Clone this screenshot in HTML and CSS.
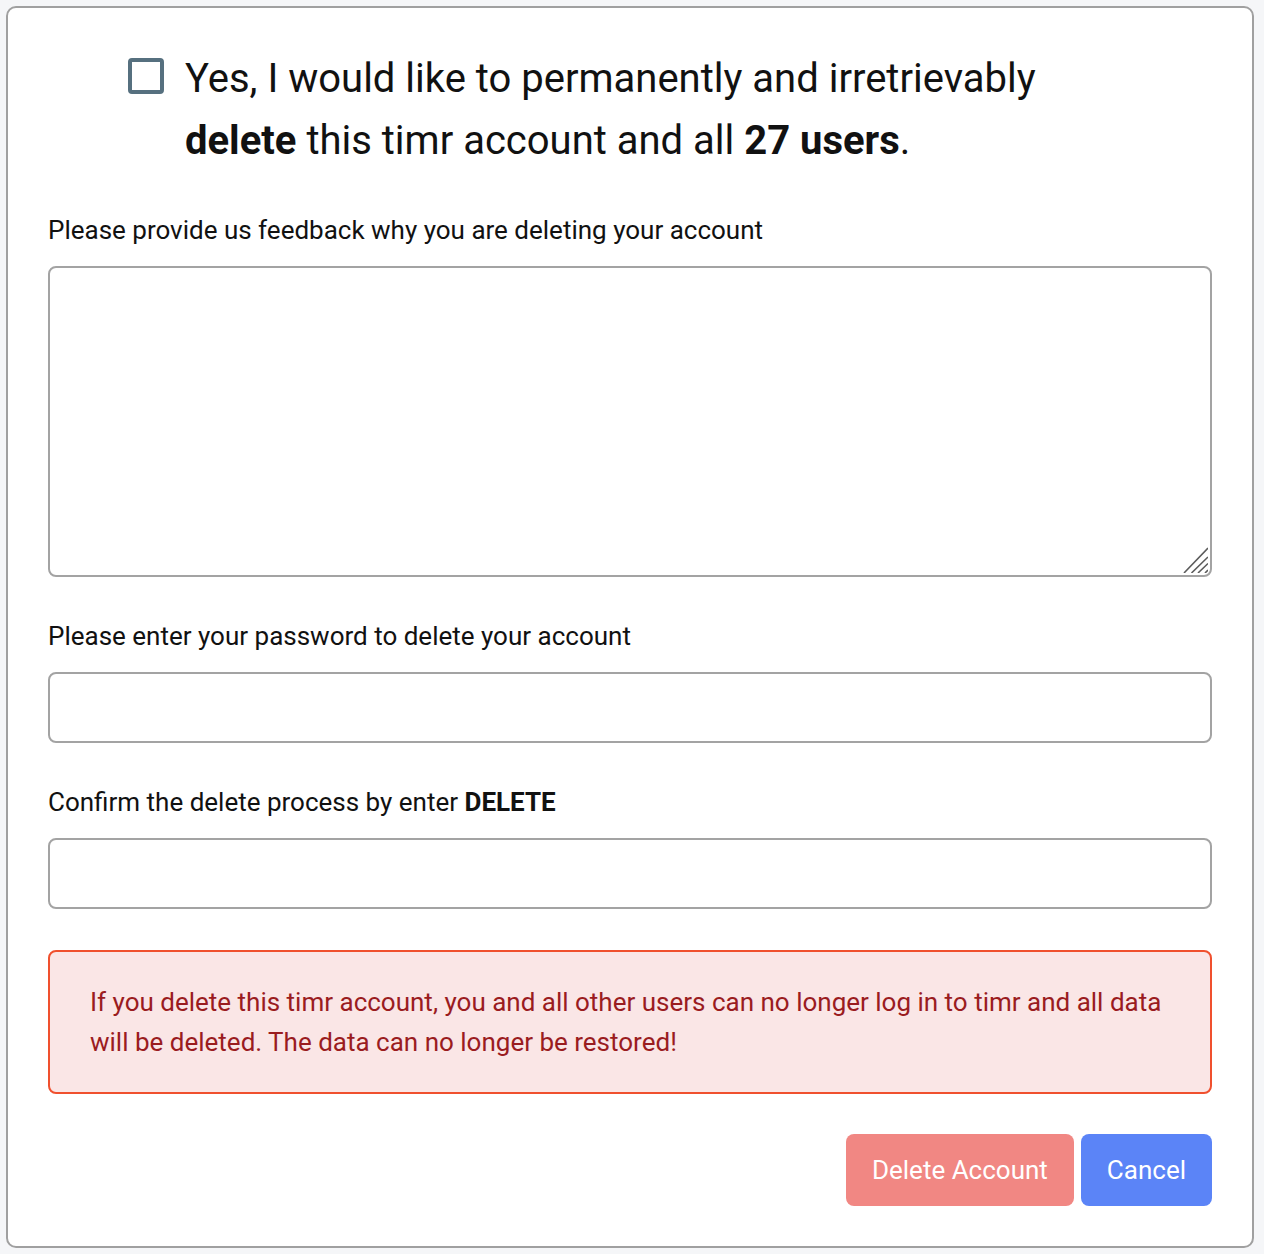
FILE: index.html
```html
<!DOCTYPE html>
<html lang="en">
<head>
<meta charset="utf-8">
<title>Delete account</title>
<link rel="stylesheet" href="styles.css">
</head>
<body>
<div class="card">
  <label class="confirm">
    <span class="box"></span>
    <span class="confirm-text">Yes, I would like to permanently and irretrievably <b>delete</b> this timr account and all <b>27 users</b>.</span>
  </label>

  <div class="field first">
    <div class="label">Please provide us feedback why you are deleting your account</div>
    <div class="area-wrap">
      <textarea class="area"></textarea>
      <svg class="grip" width="26" height="26" viewBox="0 0 26 26" aria-hidden="true">
        <path d="M26 1 L2 26 M26 10 L9.5 26 M26 16.5 L16 26 M26 23 L23 26" stroke="#5c5c5c" stroke-width="1.6" fill="none"/>
      </svg>
    </div>
  </div>

  <div class="field">
    <div class="label">Please enter your password to delete your account</div>
    <input class="input" type="password">
  </div>

  <div class="field">
    <div class="label">Confirm the delete process by enter <b>DELETE</b></div>
    <input class="input" type="text">
  </div>

  <div class="alert">If you delete this timr account, you and all other users can no longer log in to timr and all data will be deleted. The data can no longer be restored!</div>

  <div class="actions">
    <button class="btn btn-delete">Delete Account</button>
    <button class="btn btn-cancel">Cancel</button>
  </div>
</div>
</body>
</html>
```
FILE: styles.css
```css
html, body {
  margin: 0;
  background: #f5f6f8;
}
body {
  padding: 6px 10px 6px 6px;
  font-family: Roboto, "Liberation Sans", Arial, sans-serif;
  color: #111;
}
.card {
  background: #fff;
  border: 2px solid #a0a0a0;
  border-radius: 10px;
  padding: 40px 40px 40px 40px;
}
.confirm {
  display: flex;
  align-items: flex-start;
  padding-left: 80px;
  gap: 21px;
  cursor: pointer;
}
.box {
  flex: none;
  width: 36px;
  height: 36px;
  box-sizing: border-box;
  border: 4px solid #56707f;
  border-radius: 4px;
  margin-top: 10px;
}
.confirm-text {
  font-size: 40px;
  line-height: 62px;
  max-width: 880px;
}
.confirm-text b { font-weight: 700; }
.field { margin-top: 41px; }
.field.first { margin-top: 40px; }
.label {
  font-size: 26px;
  line-height: 36px;
  margin-bottom: 18px;
}
.area-wrap {
  position: relative;
}
.area, .input {
  display: block;
  width: 100%;
  box-sizing: border-box;
  border: 2px solid #a3a3a3;
  border-radius: 8px;
  background: #fff;
  font: inherit;
  font-size: 26px;
  margin: 0;
  outline: none;
}
.area {
  height: 311px;
  resize: none;
}
.grip {
  position: absolute;
  right: 4px;
  bottom: 4px;
  pointer-events: none;
}
.input {
  height: 71px;
  padding: 0 20px;
}
.alert {
  margin-top: 41px;
  border: 2px solid #f0502e;
  border-radius: 8px;
  background: #fae6e6;
  color: #9a1c1f;
  font-size: 26px;
  line-height: 40px;
  padding: 30px 40px 30px 40px;
}
.actions {
  display: flex;
  justify-content: flex-end;
  gap: 7px;
  margin-top: 40px;
}
.btn {
  border: none;
  border-radius: 8px;
  height: 72px;
  padding: 0 26px;
  font-family: inherit;
  font-size: 26px;
  color: #fff;
  cursor: pointer;
}
.btn-delete { background: #f18783; }
.btn-cancel { background: #5b84f7; }
```
